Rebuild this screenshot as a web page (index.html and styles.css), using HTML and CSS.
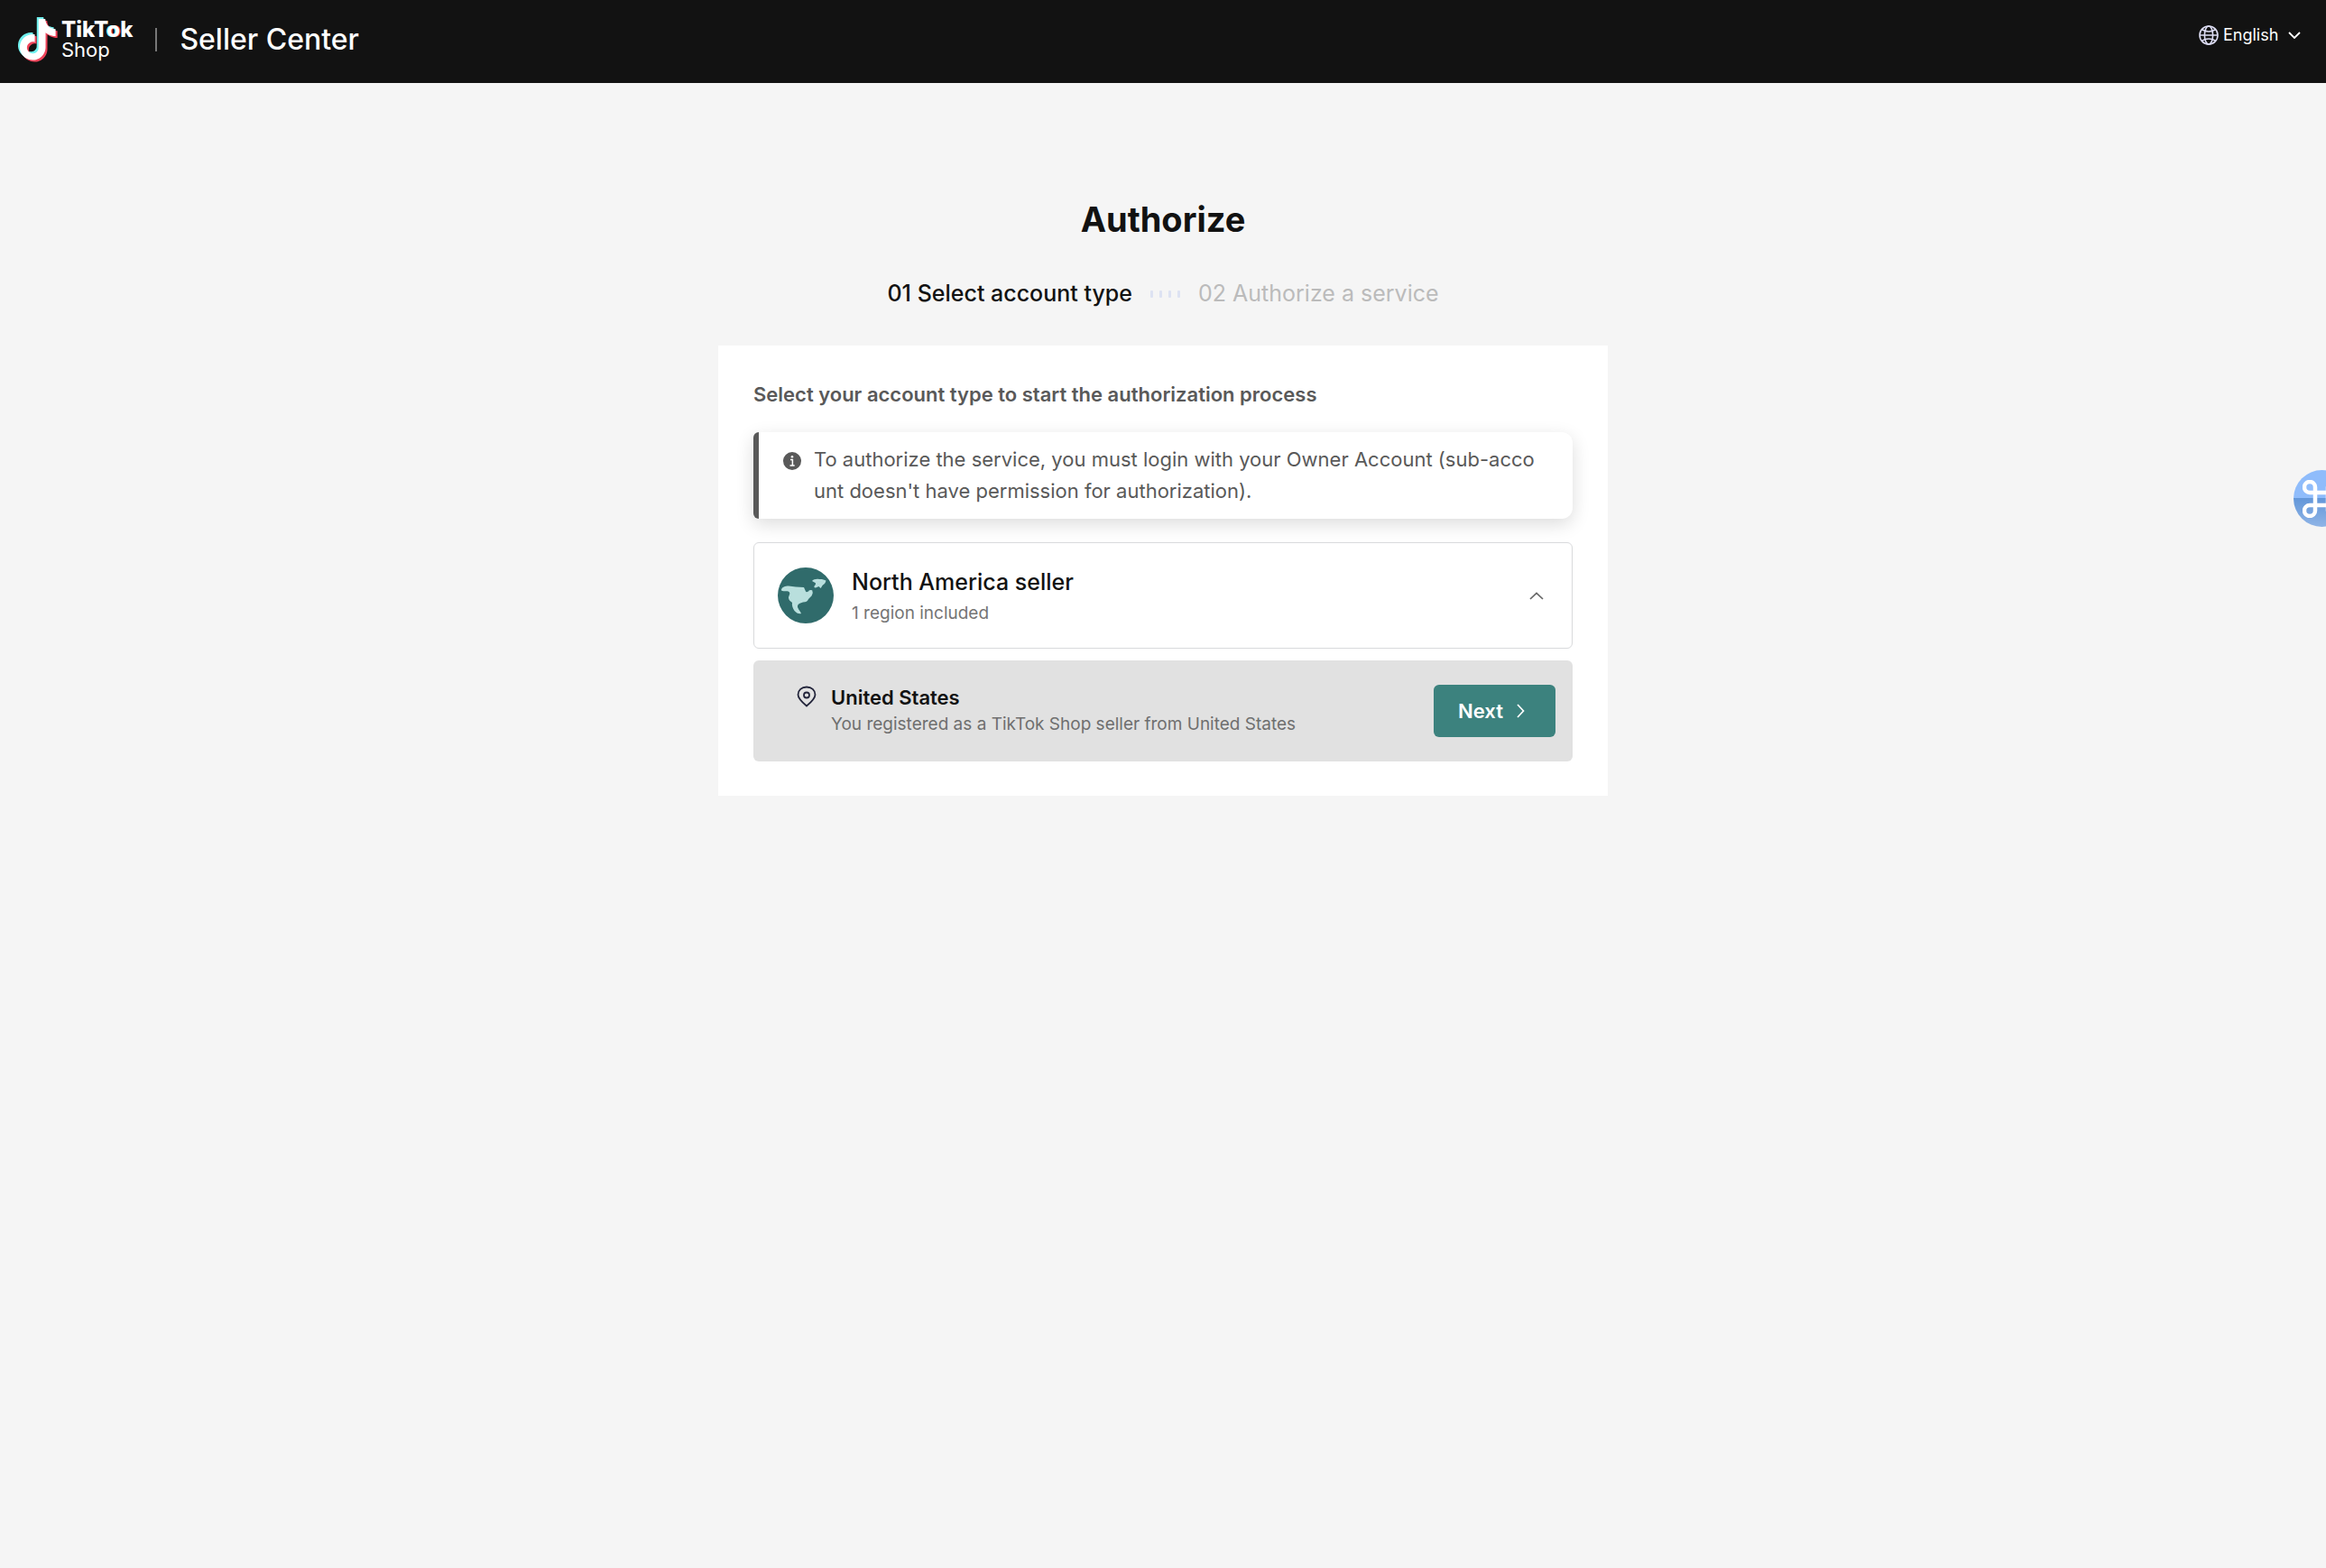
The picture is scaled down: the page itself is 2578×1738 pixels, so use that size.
FILE: index.html
```html
<!DOCTYPE html>
<html lang="en">
<head>
	<meta charset="utf-8">
	<meta name="viewport" content="width=device-width, initial-scale=1">
	<title>Authorize - TikTok Shop Seller Center</title>
	<link rel="stylesheet" href="styles.css">
</head>
<body>

	<header class="site-header">
		<div class="brand">
			<a class="logo" href="#" aria-label="TikTok Shop">
				<svg class="logo-note" viewBox="0 0 44 50" aria-hidden="true">
					<defs>
						<path id="note" d="M12.525.02c1.31-.02 2.61-.01 3.91-.02.08 1.53.63 3.09 1.75 4.17 1.12 1.11 2.7 1.62 4.24 1.79v4.03c-1.44-.05-2.89-.35-4.2-.97-.57-.26-1.1-.59-1.62-.93-.01 2.92.01 5.84-.02 8.75-.08 1.4-.54 2.79-1.35 3.94-1.31 1.92-3.58 3.17-5.91 3.21-1.43.08-2.86-.31-4.08-1.03-2.02-1.19-3.44-3.37-3.65-5.71-.02-.5-.03-1-.01-1.49.18-1.9 1.12-3.72 2.58-4.96 1.66-1.44 3.98-2.13 6.15-1.72.02 1.48-.04 2.96-.04 4.44-.99-.32-2.15-.23-3.02.37-.63.41-1.11 1.04-1.36 1.75-.21.51-.15 1.07-.14 1.61.24 1.64 1.82 3.02 3.5 2.87 1.12-.01 2.19-.66 2.77-1.61.19-.33.4-.67.41-1.06.1-1.79.06-3.57.07-5.36.01-4.03-.01-8.05.02-12.07z"/>
					</defs>
					<use href="#note" fill="#6ff0ee" transform="translate(-3 0) scale(1.9)"/>
					<use href="#note" fill="#ee4359" transform="translate(1 4) scale(1.9)"/>
					<use href="#note" fill="#fff" transform="translate(-1 2) scale(1.9)"/>
				</svg>
				<span class="logo-text">
					<span class="logo-tiktok">TikT<span class="logo-o">o</span>k</span>
					<span class="logo-shop">Shop</span>
				</span>
			</a>
			<span class="divider"></span>
			<span class="product">Seller Center</span>
		</div>

		<div class="language">
			<svg class="icon-globe" viewBox="0 0 22 22" aria-hidden="true">
				<g fill="none" stroke="#dcdcf2" stroke-width="1.6">
					<circle cx="11" cy="11" r="10"/>
					<ellipse cx="11" cy="11" rx="4.6" ry="10"/>
					<path d="M1 11h20M3.5 4.8c4.5 2.6 10.5 2.6 15 0M3.5 17.2c4.5-2.6 10.5-2.6 15 0"/>
				</g>
			</svg>
			<select class="language-select" aria-label="Language">
				<option>English</option>
			</select>
			<svg class="icon-down" viewBox="0 0 14 8" aria-hidden="true">
				<path d="M1 1l6 6 6-6" fill="none" stroke="#fff" stroke-width="1.8"/>
			</svg>
		</div>
	</header>

	<main class="page">
		<h1 class="page-title">Authorize</h1>

		<ol class="steps">
			<li class="step active">01 Select account type</li>
			<li class="step-dots" aria-hidden="true"><i></i><i></i><i></i><i></i></li>
			<li class="step">02 Authorize a service</li>
		</ol>

		<section class="card">
			<h2 class="card-title">Select your account type to start the authorization process</h2>

			<div class="notice">
				<svg class="icon-info" viewBox="0 0 20 20" aria-hidden="true">
					<circle cx="10" cy="10" r="10" fill="#595959"/>
					<circle cx="10" cy="5.3" r="1.3" fill="#fff"/>
					<path d="M8 8.5h2.4v6.3M7.5 15h5.2" fill="none" stroke="#fff" stroke-width="1.5"/>
				</svg>
				<p class="notice-text">To authorize the service, you must login with your Owner Account (sub-account doesn't have permission for authorization).</p>
			</div>

			<button class="region" type="button" aria-expanded="true">
				<svg class="region-globe" viewBox="0 0 62 62" aria-hidden="true">
					<circle cx="31" cy="31" r="31" fill="#306b6b"/>
					<g fill="#b9dfdd">
						<path d="M4 24.500C5 21.500 8 20.500 12 20.500L20 21.500 29 22 31 26.500C32 28.500 33.500 26 37 25.500 39.500 26 39 29 37.500 31.500L34 35C33.500 37.500 31 38.500 28 38.500 25 39.500 22.500 40 22 42.500 21.500 45 24.500 47.500 26 51 24 52 20.500 50.500 18.500 48 16.500 45 15.500 42 16 39 14 37.500 12 36 12 33.500 12 31.500 14.500 29 12.500 27 10 25.500 7.500 27 4 25.500z"/>
						<path d="M38 15c1.500-2 5-2.500 8-2 3-.2 5.500.5 7.500 1.500-.5 2-1.500 4-3.500 5-1 1-1.500 2.500-2.500 3.500l-2-2-3.500 1.500c-2 0-2-1.500-1-2.500 1-1 1.500-2.500.5-3z"/>
						<path d="M34.500 25.500c1-.8 3-.8 4 0l-1 2-3-.5z"/>
					</g>
				</svg>
				<span class="region-info">
					<span class="region-name">North America seller</span>
					<span class="region-note">1 region included</span>
				</span>
				<svg class="icon-up" viewBox="0 0 16 9" aria-hidden="true">
					<path d="M1 8l7-6.500L15 8" fill="none" stroke="#666" stroke-width="1.7"/>
				</svg>
			</button>

			<div class="country">
				<svg class="icon-pin" viewBox="0 0 22 24" aria-hidden="true">
					<g fill="none" stroke="#22243a" stroke-width="1.8">
						<path d="M11 22.500C5 17.500 1.500 14 1.500 10 1.500 5 5.500 1.500 11 1.500S20.500 5 20.500 10c0 4-3.500 7.500-9.500 12.500z"/>
						<circle cx="11" cy="10.500" r="3"/>
					</g>
				</svg>
				<div class="country-info">
					<div class="country-name">United States</div>
					<div class="country-note">You registered as a TikTok Shop seller from United States</div>
				</div>
				<button class="next" type="button">
					Next
					<svg class="icon-next" viewBox="0 0 9 16" aria-hidden="true">
						<path d="M1 1l6.500 7L1 15" fill="none" stroke="#fff" stroke-width="1.7"/>
					</svg>
				</button>
			</div>
		</section>
	</main>

	<!-- floating shortcut, half off the right edge -->
	<button class="shortcut" type="button" aria-label="Open shortcuts">
		<svg class="icon-command" viewBox="0 0 42 42" aria-hidden="true">
			<path d="M14 14V8a6 6 0 1 0-6 6h26a6 6 0 1 0-6-6v26a6 6 0 1 0 6-6H8a6 6 0 1 0 6 6z" fill="none" stroke="#fff" stroke-width="4.5"/>
		</svg>
	</button>

</body>
</html>
```
FILE: styles.css
```css
* {
	box-sizing: border-box;
}

html, body {
	margin: 0;
	padding: 0;
}

body {
	min-height: 100vh;
	background-color: #f5f5f5;
	color: #121212;
	font-family: Inter, Roboto, sans-serif;
	overflow-x: hidden;
}

h1, h2, p, ol {
	margin: 0;
	padding: 0;
}

button, select {
	font-family: inherit;
	border: 0;
	cursor: pointer;
}

svg {
	display: block;
	flex: none;
}

/* header */
.site-header {
	display: flex;
	justify-content: space-between;
	align-items: flex-start;
	height: 92px;
	padding: 19px 28px 0 20px;
	background-color: #121212;
	color: #fff;
}
.brand {
	display: flex;
	align-items: center;
}
.logo {
	display: flex;
	align-items: center;
	gap: 4px;
	color: #fff;
	text-decoration: none;
}
.logo-note {
	width: 44px;
	height: 50px;
}
.logo-text {
	display: flex;
	flex-direction: column;
	font-size: 24px;
	line-height: 22px;
}
.logo-tiktok {
	font-weight: 800;
}
.logo-shop {
	font-size: 22px;
}
.logo-o {
	text-shadow: -1px 0 #6ff0ee, 1px 0 #ee4359;
}
.divider {
	width: 2px;
	height: 26px;
	margin: 0 25px;
	background-color: #777;
}
.product {
	font-size: 32px;
	font-weight: 500;
	line-height: 50px;
}
.language {
	display: flex;
	align-items: center;
	gap: 5px;
	padding-top: 8px;
}
.icon-globe {
	width: 22px;
	height: 22px;
}
.language-select {
	appearance: none;
	padding: 0;
	margin-right: 5px;
	background: none;
	color: #fff;
	font-size: 18px;
	line-height: 24px;
}
.icon-down {
	width: 14px;
	height: 8px;
}

/* content */
.page {
	display: flex;
	flex-direction: column;
	align-items: center;
	padding: 124px 24px 48px;
}
.page-title {
	font-size: 38px;
	font-weight: 700;
	line-height: 54px;
}
.steps {
	display: flex;
	align-items: center;
	gap: 20px;
	margin: 37px 0 39px;
	list-style: none;
}
.step {
	color: #bbb;
	font-size: 25px;
	line-height: 37px;
}
.step.active {
	color: #121212;
	font-weight: 500;
}
.step-dots {
	display: flex;
	gap: 7px;
}
.step-dots i {
	width: 3px;
	height: 8px;
	border-radius: 1px;
	background-color: #dde2f2;
}

.card {
	width: 100%;
	max-width: 986px;
	padding: 39px 39px 38px;
	background-color: #fff;
}
.card-title {
	margin-bottom: 26px;
	color: #595959;
	font-size: 22px;
	font-weight: 600;
	line-height: 31px;
}
.notice {
	display: flex;
	gap: 14px;
	margin-bottom: 26px;
	padding: 13px 36px 13px 27px;
	border-left: 6px solid #595959;
	border-radius: 6px 12px 12px 6px;
	background-color: #fff;
	box-shadow: 0 6px 20px rgba(0, 0, 0, 0.14);
}
.icon-info {
	width: 20px;
	height: 20px;
	margin-top: 9px;
}
.notice-text {
	color: #595959;
	font-size: 22px;
	line-height: 35px;
	word-break: break-all;
}

.region {
	display: flex;
	align-items: center;
	width: 100%;
	height: 118px;
	margin-bottom: 13px;
	padding: 0 31px 0 26px;
	border: 1px solid #d9dadc;
	border-radius: 6px;
	background-color: #fff;
	text-align: left;
}
.region-globe {
	width: 62px;
	height: 62px;
}
.region-info {
	display: flex;
	flex-direction: column;
	flex: 1;
	gap: 3px;
	margin-left: 20px;
}
.region-name {
	color: #121212;
	font-size: 25px;
	font-weight: 500;
	line-height: 36px;
}
.region-note {
	color: #757575;
	font-size: 19px;
	line-height: 28px;
}
.icon-up {
	width: 16px;
	height: 9px;
}

.country {
	display: flex;
	align-items: flex-start;
	padding: 27px 19px 25px 48px;
	border-radius: 6px;
	background-color: #e1e1e1;
}
.icon-pin {
	width: 22px;
	height: 24px;
	margin-top: 1px;
}
.country-info {
	flex: 1;
	margin-left: 16px;
}
.country-name {
	font-size: 22px;
	font-weight: 600;
	line-height: 28px;
}
.country-note {
	color: #6f6f6f;
	font-size: 19px;
	line-height: 32px;
}
.next {
	display: flex;
	align-items: center;
	gap: 15px;
	height: 58px;
	padding: 0 34px 0 27px;
	border-radius: 6px;
	background-color: #3c827e;
	color: #fff;
	font-size: 22px;
	font-weight: 600;
}
.icon-next {
	width: 9px;
	height: 16px;
}

.shortcut {
	position: fixed;
	top: 521px;
	right: -27px;
	width: 63px;
	height: 63px;
	padding: 10px;
	border-radius: 50%;
	background: linear-gradient(#8fbcfb 50%, #6397d9 50%, #8fb4e6);
}
.icon-command {
	width: 42px;
	height: 42px;
}
```
